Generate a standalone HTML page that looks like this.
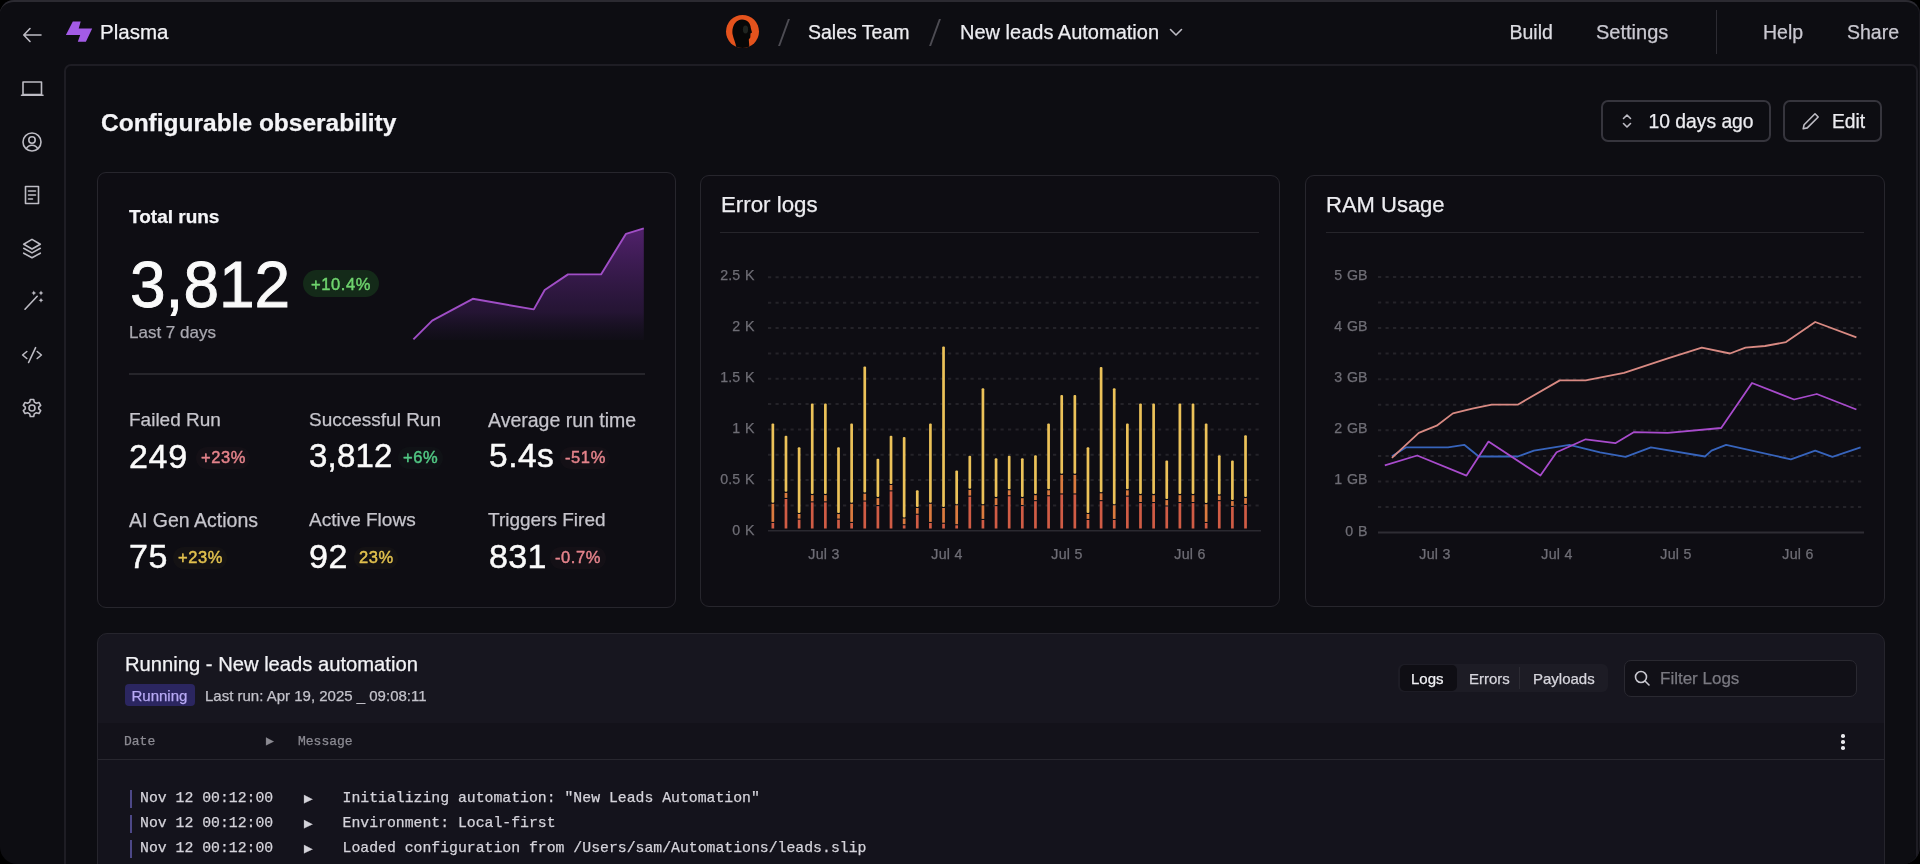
<!DOCTYPE html>
<html><head><meta charset="utf-8">
<style>
*{box-sizing:border-box;margin:0;padding:0}
html,body{width:1920px;height:864px;overflow:hidden;background:#000}
body{font-family:"Liberation Sans",sans-serif;color:#ececf0;position:relative}
.abs{position:absolute;white-space:pre;-webkit-text-stroke:0.25px currentColor}
#win{will-change:transform;position:absolute;left:0;top:0;width:1920px;height:864px;background:#0d0d12;overflow:hidden}
#frame{position:absolute;left:0;top:0;width:1920px;height:864px;border-radius:14px 14px 17px 17px;border-top:2.5px solid #2b2a31;border-right:1.5px solid #1b1a20;box-shadow:0 0 0 40px #000;pointer-events:none}
#main{position:absolute;left:64.3px;top:63.8px;width:1854px;height:840px;background:#0d0d12;border:2px solid #1e1d24;border-radius:7px}
.card{position:absolute;border:1.5px solid #27262d;border-radius:9px;background:#0e0d13}
.lab{font-size:14.2px;color:#6e6d75}
.mono{font-family:"Liberation Mono",monospace}
.ic{position:absolute;fill:none;stroke:#bdbcc4;stroke-width:1.6;stroke-linecap:round;stroke-linejoin:round}
</style></head><body>
<div id="win">
  <!-- top bar -->
  <svg class="ic" style="left:20px;top:24px" width="24" height="22" viewBox="0 0 24 22"><path d="M4 11H21M10 4.5L3.8 11L10 17.5"/></svg>
  <svg style="position:absolute;left:64px;top:19px" width="30" height="26" viewBox="0 0 30 26"><path fill="#a35be6" d="M8.8 2.5H16.7L14.7 9.5H28.2L21.9 22.7H13.8L16.2 16H1.9Z"/></svg>
  <div class="abs" style="left:100px;top:20px;font-size:20.5px;color:#f2f2f5">Plasma</div>

  <div style="position:absolute;left:726px;top:15px;width:33px;height:33px;border-radius:50%;background:#e4531d;overflow:hidden">
    <svg width="33" height="33" viewBox="0 0 33 33"><path fill="#070707" d="M10.5 34C10 28 7.5 24 6.5 19C5.5 11 10 4.5 16 4.5C21.5 4.5 24.5 8.5 24.8 13L26 17.5L24.5 18.5L24.3 22.5L22.8 24.5L23.5 34Z"/><ellipse cx="19.5" cy="14.5" rx="2.6" ry="4" fill="#3d4a40" opacity="0.45"/></svg>
  </div>
  <div style="position:absolute;left:783px;top:19px;width:1.6px;height:27px;background:#4d4c53;transform:skewX(-20deg)"></div>
  <div class="abs" style="left:808px;top:20.5px;font-size:19.5px;color:#ececf0">Sales Team</div>
  <div style="position:absolute;left:934px;top:19px;width:1.6px;height:27px;background:#4d4c53;transform:skewX(-20deg)"></div>
  <div class="abs" style="left:960px;top:20.5px;font-size:20px;color:#ececf0">New leads Automation</div>
  <svg class="ic" style="left:1168px;top:25px" width="16" height="14" viewBox="0 0 16 14"><path d="M2.5 4.5L8 10L13.5 4.5"/></svg>

  <div class="abs" style="left:1509.5px;top:20.5px;font-size:19.5px;color:#dcdce2">Build</div>
  <div class="abs" style="left:1596px;top:20.5px;font-size:20px;color:#c9c8d0">Settings</div>
  <div style="position:absolute;left:1716px;top:10px;width:1.3px;height:44px;background:#2c2b32"></div>
  <div class="abs" style="left:1763px;top:20.5px;font-size:19.5px;color:#c9c8d0">Help</div>
  <div class="abs" style="left:1847px;top:20.5px;font-size:19.5px;color:#c9c8d0">Share</div>

  <!-- sidebar -->
  
  <svg class="ic" style="left:18px;top:78px" width="28" height="22" viewBox="0 0 28 22"><path d="M5 4H23.5V16.5H5Z M3.5 17.3H25"/></svg>
  <svg class="ic" style="left:20px;top:130px" width="24" height="24" viewBox="0 0 24 24"><circle cx="12" cy="12" r="9"/><circle cx="12" cy="10" r="3.2"/><path d="M6.3 18.6C7.5 16.3 9.5 15.2 12 15.2S16.5 16.3 17.7 18.6"/></svg>
  <svg class="ic" style="left:20px;top:183px" width="24" height="24" viewBox="0 0 24 24"><path d="M5.5 3.5H18.5V20.5H5.5Z M8.5 8H15.5 M8.5 12H15.5 M8.5 16H12.5"/></svg>
  <svg class="ic" style="left:20px;top:236px" width="24" height="24" viewBox="0 0 24 24"><path d="M12 3.4L20.3 8.2L12 13L3.7 8.2Z M3.7 12.3L12 16.9L20.3 12.3 M3.7 17.2L12 21.8L20.3 17.2"/></svg>
  <svg class="ic" style="left:20px;top:288px" width="24" height="24" viewBox="0 0 24 24"><path d="M5 21.2L17.2 8.3"/><path fill="#bdbcc4" stroke="none" d="M13.8 2.6L14.6 4.2L16.2 5L14.6 5.8L13.8 7.4L13 5.8L11.4 5L13 4.2Z M21 2.6L21.8 4.2L23.4 5L21.8 5.8L21 7.4L20.2 5.8L18.6 5L20.2 4.2Z M21 9.9L21.8 11.5L23.4 12.3L21.8 13.1L21 14.7L20.2 13.1L18.6 12.3L20.2 11.5Z"/></svg>
  <svg class="ic" style="left:20px;top:342px" width="24" height="24" viewBox="0 0 24 24"><path d="M6.8 9.5L2.6 13L6.8 16.5 M17.2 9.5L21.4 13L17.2 16.5 M15.6 5.6L8.6 20.5"/></svg>
  <svg class="ic" style="left:20px;top:396px" width="24" height="24" viewBox="0 0 24 24"><circle cx="12" cy="12" r="3"/><path d="M10.3 3.5H13.7L14.3 6.1L16.4 7.3L19 6.5L20.7 9.4L18.7 11.2V12.8L20.7 14.6L19 17.5L16.4 16.7L14.3 17.9L13.7 20.5H10.3L9.7 17.9L7.6 16.7L5 17.5L3.3 14.6L5.3 12.8V11.2L3.3 9.4L5 6.5L7.6 7.3L9.7 6.1Z"/></svg>


  <div id="main"></div>
  <div class="abs" style="left:101px;top:108.5px;font-size:24.5px;font-weight:700;color:#f4f4f7">Configurable obserability</div>
  <div style="position:absolute;left:1601px;top:100px;width:170px;height:42px;border:2px solid #36353d;border-radius:7px"></div>
  <svg class="ic" style="left:1619px;top:112px" width="16" height="18" viewBox="0 0 16 18"><path d="M4.5 6.5L8 3L11.5 6.5 M4.5 11.5L8 15L11.5 11.5"/></svg>
  <div class="abs" style="left:1648.5px;top:110.5px;font-size:19.3px;color:#ececf0">10 days ago</div>
  <div style="position:absolute;left:1783px;top:100px;width:99px;height:42px;border:2px solid #36353d;border-radius:7px"></div>
  <svg class="ic" style="left:1800px;top:110px" width="22" height="22" viewBox="0 0 22 22"><path d="M15 3.8L18.2 7L7.3 17.9L3.2 18.8L4.1 14.7Z"/></svg>
  <div class="abs" style="left:1832px;top:110.5px;font-size:19.3px;color:#ececf0">Edit</div>

  <!-- card 1 -->
  <div class="card" style="left:97px;top:171.5px;width:579px;height:436.5px"></div>
  <div class="abs" style="left:129px;top:205.5px;font-size:19px;font-weight:700;color:#f4f4f7">Total runs</div>
  <div class="abs" style="left:130px;top:248px;font-size:64px;color:#fafafa;-webkit-text-stroke:0.9px #fafafa">3,812</div>
  <div style="position:absolute;left:303px;top:270px;width:76px;height:27px;border-radius:14px;background:#142a19"></div>
  <div class="abs" style="left:311px;top:274.5px;font-size:16.5px;letter-spacing:0.6px;color:#6fd46e;-webkit-text-stroke:0.45px #6fd46e">+10.4%</div>
  <div class="abs" style="left:129px;top:323px;font-size:17px;color:#a9a8b0">Last 7 days</div>
  <div style="position:absolute;left:129px;top:373px;width:516px;height:1.5px;background:#26252b"></div>

  <div class="abs" style="left:129px;top:408.5px;font-size:19px;color:#c6c5cc">Failed Run</div>
  <div class="abs" style="left:129px;top:436.5px;letter-spacing:0.7px;font-size:34px;color:#fafafa;-webkit-text-stroke:0.5px #fafafa">249</div>
  <div class="abs" style="left:196px;top:446.8px;padding:1.5px 4.4px 1.5px 5px;border-radius:11px;background:rgba(229,131,139,0.03);font-size:16.5px;letter-spacing:0.6px;color:#e5838b;-webkit-text-stroke:0.45px #e5838b">+23%</div>
  <div class="abs" style="left:309px;top:408.5px;font-size:19px;color:#c6c5cc">Successful Run</div>
  <div class="abs" style="left:309px;top:436.5px;letter-spacing:0.2px;font-size:33px;color:#fafafa;-webkit-text-stroke:0.5px #fafafa">3,812</div>
  <div class="abs" style="left:398px;top:446.8px;padding:1.5px 4.4px 1.5px 5px;border-radius:11px;background:rgba(82,201,133,0.03);font-size:16.5px;letter-spacing:0.6px;color:#52c985;-webkit-text-stroke:0.45px #52c985">+6%</div>
  <div class="abs" style="left:488px;top:408.5px;font-size:19.5px;color:#c6c5cc">Average run time</div>
  <div class="abs" style="left:489px;top:436.5px;letter-spacing:0.5px;font-size:33.5px;color:#fafafa;-webkit-text-stroke:0.5px #fafafa">5.4s</div>
  <div class="abs" style="left:560px;top:446.8px;padding:1.5px 4.4px 1.5px 5px;border-radius:11px;background:rgba(229,131,139,0.03);font-size:16.5px;letter-spacing:0.6px;color:#e5838b;-webkit-text-stroke:0.45px #e5838b">-51%</div>

  <div class="abs" style="left:129px;top:508.5px;font-size:19.5px;color:#c6c5cc">AI Gen Actions</div>
  <div class="abs" style="left:129px;top:536.5px;letter-spacing:0.7px;font-size:34px;color:#fafafa;-webkit-text-stroke:0.5px #fafafa">75</div>
  <div class="abs" style="left:173px;top:546.8px;padding:1.5px 4.4px 1.5px 5px;border-radius:11px;background:rgba(226,193,78,0.03);font-size:16.5px;letter-spacing:0.6px;color:#e2c14e;-webkit-text-stroke:0.45px #e2c14e">+23%</div>
  <div class="abs" style="left:309px;top:508.5px;font-size:19px;color:#c6c5cc">Active Flows</div>
  <div class="abs" style="left:309px;top:536.5px;letter-spacing:0.7px;font-size:34px;color:#fafafa;-webkit-text-stroke:0.5px #fafafa">92</div>
  <div class="abs" style="left:354px;top:546.8px;padding:1.5px 4.4px 1.5px 5px;border-radius:11px;background:rgba(226,193,78,0.03);font-size:16.5px;letter-spacing:0.6px;color:#e2c14e;-webkit-text-stroke:0.45px #e2c14e">23%</div>
  <div class="abs" style="left:488px;top:508.5px;font-size:19px;color:#c6c5cc">Triggers Fired</div>
  <div class="abs" style="left:489px;top:536.5px;letter-spacing:0.3px;font-size:34px;color:#fafafa;-webkit-text-stroke:0.5px #fafafa">831</div>
  <div class="abs" style="left:550px;top:546.8px;padding:1.5px 4.4px 1.5px 5px;border-radius:11px;background:rgba(229,131,139,0.03);font-size:16.5px;letter-spacing:0.6px;color:#e5838b;-webkit-text-stroke:0.45px #e5838b">-0.7%</div>

  <!-- card 2 -->
  <div class="card" style="left:700px;top:175px;width:580px;height:432px"></div>
  <div class="abs" style="left:721px;top:192px;font-size:22.3px;color:#ececf0">Error logs</div>
  <div style="position:absolute;left:720px;top:231.8px;width:539px;height:1.3px;background:#26252b"></div>
  <!-- card 3 -->
  <div class="card" style="left:1305px;top:175px;width:580px;height:432px"></div>
  <div class="abs" style="left:1326px;top:192px;font-size:22px;color:#ececf0">RAM Usage</div>
  <div style="position:absolute;left:1326px;top:231.8px;width:538px;height:1.3px;background:#26252b"></div>
<div class="abs lab" style="left:700.5px;width:54px;word-spacing:1px;text-align:right;top:267px">2.5 K</div><div class="abs lab" style="left:700.5px;width:54px;word-spacing:1px;text-align:right;top:318px">2 K</div><div class="abs lab" style="left:700.5px;width:54px;word-spacing:1px;text-align:right;top:369px">1.5 K</div><div class="abs lab" style="left:700.5px;width:54px;word-spacing:1px;text-align:right;top:420px">1 K</div><div class="abs lab" style="left:700.5px;width:54px;word-spacing:1px;text-align:right;top:471px">0.5 K</div><div class="abs lab" style="left:700.5px;width:54px;word-spacing:1px;text-align:right;top:522px">0 K</div><div class="abs lab" style="left:784px;width:80px;text-align:center;top:546.3px;letter-spacing:0.3px">Jul 3</div><div class="abs lab" style="left:907px;width:80px;text-align:center;top:546.3px;letter-spacing:0.3px">Jul 4</div><div class="abs lab" style="left:1027px;width:80px;text-align:center;top:546.3px;letter-spacing:0.3px">Jul 5</div><div class="abs lab" style="left:1150px;width:80px;text-align:center;top:546.3px;letter-spacing:0.3px">Jul 6</div><div class="abs lab" style="left:1300.5px;width:67px;word-spacing:1px;text-align:right;top:267px">5 GB</div><div class="abs lab" style="left:1300.5px;width:67px;word-spacing:1px;text-align:right;top:318px">4 GB</div><div class="abs lab" style="left:1300.5px;width:67px;word-spacing:1px;text-align:right;top:369px">3 GB</div><div class="abs lab" style="left:1300.5px;width:67px;word-spacing:1px;text-align:right;top:420px">2 GB</div><div class="abs lab" style="left:1300.5px;width:67px;word-spacing:1px;text-align:right;top:471px">1 GB</div><div class="abs lab" style="left:1300.5px;width:67px;word-spacing:1px;text-align:right;top:523px">0 B</div><div class="abs lab" style="left:1395px;width:80px;text-align:center;top:546.3px;letter-spacing:0.3px">Jul 3</div><div class="abs lab" style="left:1517px;width:80px;text-align:center;top:546.3px;letter-spacing:0.3px">Jul 4</div><div class="abs lab" style="left:1636px;width:80px;text-align:center;top:546.3px;letter-spacing:0.3px">Jul 5</div><div class="abs lab" style="left:1758px;width:80px;text-align:center;top:546.3px;letter-spacing:0.3px">Jul 6</div>
  <svg style="position:absolute;left:0;top:0" width="1920" height="864">
   <defs><linearGradient id="sg" x1="0" y1="0" x2="0" y2="1"><stop offset="0" stop-color="#7a2ea2" stop-opacity="0.62"/><stop offset="0.75" stop-color="#5a2680" stop-opacity="0.3"/><stop offset="1" stop-color="#3a1f5a" stop-opacity="0.05"/></linearGradient></defs>
   <path fill="url(#sg)" d="M413.4 339.4L432.2 320.6L472.8 298.8L533.8 309.4L544.7 290L568 274.4L601 274.4L626 233.8L643.8 228.4V340H413.4Z"/>
   <polyline fill="none" stroke="#a04ec6" stroke-width="1.9" stroke-linejoin="round" points="413.4,339.4 432.2,320.6 472.8,298.8 533.8,309.4 544.7,290 568,274.4 601,274.4 626,233.8 643.8,228.4"/>
   <line x1="768" y1="277.3" x2="1261" y2="277.3" stroke="#242329" stroke-width="2" stroke-dasharray="3.2 4.3"/>
<line x1="768" y1="302.7" x2="1261" y2="302.7" stroke="#242329" stroke-width="2" stroke-dasharray="3.2 4.3"/>
<line x1="768" y1="328.0" x2="1261" y2="328.0" stroke="#242329" stroke-width="2" stroke-dasharray="3.2 4.3"/>
<line x1="768" y1="353.4" x2="1261" y2="353.4" stroke="#242329" stroke-width="2" stroke-dasharray="3.2 4.3"/>
<line x1="768" y1="378.7" x2="1261" y2="378.7" stroke="#242329" stroke-width="2" stroke-dasharray="3.2 4.3"/>
<line x1="768" y1="404.1" x2="1261" y2="404.1" stroke="#242329" stroke-width="2" stroke-dasharray="3.2 4.3"/>
<line x1="768" y1="429.4" x2="1261" y2="429.4" stroke="#242329" stroke-width="2" stroke-dasharray="3.2 4.3"/>
<line x1="768" y1="454.8" x2="1261" y2="454.8" stroke="#242329" stroke-width="2" stroke-dasharray="3.2 4.3"/>
<line x1="768" y1="480.1" x2="1261" y2="480.1" stroke="#242329" stroke-width="2" stroke-dasharray="3.2 4.3"/>
<line x1="768" y1="505.5" x2="1261" y2="505.5" stroke="#242329" stroke-width="2" stroke-dasharray="3.2 4.3"/>
<line x1="768" y1="530.8" x2="1261" y2="530.8" stroke="#2a2930" stroke-width="1.6"/>
<rect x="771.50" y="423.6" width="2.7" height="79.1" rx="1" fill="#ecc259"/>
<rect x="771.50" y="503.8" width="2.7" height="18.1" fill="#db7b3f"/>
<rect x="771.50" y="523.0" width="2.7" height="5.5" fill="#d05c45"/>
<rect x="784.63" y="435.7" width="2.7" height="56.1" rx="1" fill="#ecc259"/>
<rect x="784.63" y="492.9" width="2.7" height="5.0" fill="#db7b3f"/>
<rect x="784.63" y="499.0" width="2.7" height="29.5" fill="#d05c45"/>
<rect x="797.76" y="447.2" width="2.7" height="65.7" rx="1" fill="#ecc259"/>
<rect x="797.76" y="514.0" width="2.7" height="4.6" fill="#db7b3f"/>
<rect x="797.76" y="519.7" width="2.7" height="8.8" fill="#d05c45"/>
<rect x="810.89" y="403.4" width="2.7" height="90.6" rx="1" fill="#ecc259"/>
<rect x="810.89" y="495.1" width="2.7" height="6.2" fill="#db7b3f"/>
<rect x="810.89" y="502.4" width="2.7" height="26.1" fill="#d05c45"/>
<rect x="824.02" y="403.4" width="2.7" height="90.6" rx="1" fill="#ecc259"/>
<rect x="824.02" y="495.1" width="2.7" height="6.2" fill="#db7b3f"/>
<rect x="824.02" y="502.4" width="2.7" height="26.1" fill="#d05c45"/>
<rect x="837.15" y="447.2" width="2.7" height="65.8" rx="1" fill="#ecc259"/>
<rect x="837.15" y="514.1" width="2.7" height="4.5" fill="#db7b3f"/>
<rect x="837.15" y="519.7" width="2.7" height="8.8" fill="#d05c45"/>
<rect x="850.28" y="423.6" width="2.7" height="79.1" rx="1" fill="#ecc259"/>
<rect x="850.28" y="503.8" width="2.7" height="18.1" fill="#db7b3f"/>
<rect x="850.28" y="523.0" width="2.7" height="5.5" fill="#d05c45"/>
<rect x="863.41" y="366.5" width="2.7" height="126.1" rx="1" fill="#ecc259"/>
<rect x="863.41" y="493.7" width="2.7" height="6.8" fill="#db7b3f"/>
<rect x="863.41" y="501.6" width="2.7" height="26.9" fill="#d05c45"/>
<rect x="876.54" y="458.8" width="2.7" height="38.3" rx="1" fill="#ecc259"/>
<rect x="876.54" y="498.2" width="2.7" height="6.8" fill="#db7b3f"/>
<rect x="876.54" y="506.1" width="2.7" height="22.4" fill="#d05c45"/>
<rect x="889.67" y="435.7" width="2.7" height="48.2" rx="1" fill="#ecc259"/>
<rect x="889.67" y="485.0" width="2.7" height="5.3" fill="#db7b3f"/>
<rect x="889.67" y="491.4" width="2.7" height="37.1" fill="#d05c45"/>
<rect x="902.80" y="437.0" width="2.7" height="80.4" rx="1" fill="#ecc259"/>
<rect x="902.80" y="518.5" width="2.7" height="5.7" fill="#db7b3f"/>
<rect x="902.80" y="525.3" width="2.7" height="3.2" fill="#d05c45"/>
<rect x="915.93" y="490.3" width="2.7" height="16.6" rx="1" fill="#ecc259"/>
<rect x="915.93" y="508.0" width="2.7" height="5.7" fill="#db7b3f"/>
<rect x="915.93" y="514.8" width="2.7" height="13.7" fill="#d05c45"/>
<rect x="929.06" y="423.6" width="2.7" height="79.1" rx="1" fill="#ecc259"/>
<rect x="929.06" y="503.8" width="2.7" height="18.1" fill="#db7b3f"/>
<rect x="929.06" y="523.0" width="2.7" height="5.5" fill="#d05c45"/>
<rect x="942.19" y="346.5" width="2.7" height="160.4" rx="1" fill="#ecc259"/>
<rect x="942.19" y="508.0" width="2.7" height="14.7" fill="#db7b3f"/>
<rect x="942.19" y="523.8" width="2.7" height="4.7" fill="#d05c45"/>
<rect x="955.32" y="470.5" width="2.7" height="33.7" rx="1" fill="#ecc259"/>
<rect x="955.32" y="505.3" width="2.7" height="18.9" fill="#db7b3f"/>
<rect x="955.32" y="525.3" width="2.7" height="3.2" fill="#d05c45"/>
<rect x="968.45" y="455.7" width="2.7" height="33.1" rx="1" fill="#ecc259"/>
<rect x="968.45" y="489.9" width="2.7" height="5.7" fill="#db7b3f"/>
<rect x="968.45" y="496.7" width="2.7" height="31.8" fill="#d05c45"/>
<rect x="981.58" y="388.3" width="2.7" height="115.9" rx="1" fill="#ecc259"/>
<rect x="981.58" y="505.3" width="2.7" height="13.6" fill="#db7b3f"/>
<rect x="981.58" y="520.0" width="2.7" height="8.5" fill="#d05c45"/>
<rect x="994.71" y="458.3" width="2.7" height="38.8" rx="1" fill="#ecc259"/>
<rect x="994.71" y="498.2" width="2.7" height="6.8" fill="#db7b3f"/>
<rect x="994.71" y="506.1" width="2.7" height="22.4" fill="#d05c45"/>
<rect x="1007.84" y="455.7" width="2.7" height="33.5" rx="1" fill="#ecc259"/>
<rect x="1007.84" y="490.3" width="2.7" height="4.9" fill="#db7b3f"/>
<rect x="1007.84" y="496.3" width="2.7" height="32.2" fill="#d05c45"/>
<rect x="1020.97" y="458.3" width="2.7" height="38.8" rx="1" fill="#ecc259"/>
<rect x="1020.97" y="498.2" width="2.7" height="6.8" fill="#db7b3f"/>
<rect x="1020.97" y="506.1" width="2.7" height="22.4" fill="#d05c45"/>
<rect x="1034.10" y="455.2" width="2.7" height="38.9" rx="1" fill="#ecc259"/>
<rect x="1034.10" y="495.2" width="2.7" height="4.9" fill="#db7b3f"/>
<rect x="1034.10" y="501.2" width="2.7" height="27.3" fill="#d05c45"/>
<rect x="1047.23" y="423.6" width="2.7" height="65.6" rx="1" fill="#ecc259"/>
<rect x="1047.23" y="490.3" width="2.7" height="4.9" fill="#db7b3f"/>
<rect x="1047.23" y="496.3" width="2.7" height="32.2" fill="#d05c45"/>
<rect x="1060.36" y="394.9" width="2.7" height="78.9" rx="1" fill="#ecc259"/>
<rect x="1060.36" y="474.9" width="2.7" height="18.5" fill="#db7b3f"/>
<rect x="1060.36" y="494.5" width="2.7" height="34.0" fill="#d05c45"/>
<rect x="1073.49" y="394.9" width="2.7" height="78.9" rx="1" fill="#ecc259"/>
<rect x="1073.49" y="474.9" width="2.7" height="18.5" fill="#db7b3f"/>
<rect x="1073.49" y="494.5" width="2.7" height="34.0" fill="#d05c45"/>
<rect x="1086.62" y="447.2" width="2.7" height="65.7" rx="1" fill="#ecc259"/>
<rect x="1086.62" y="514.0" width="2.7" height="4.9" fill="#db7b3f"/>
<rect x="1086.62" y="520.0" width="2.7" height="8.5" fill="#d05c45"/>
<rect x="1099.75" y="366.9" width="2.7" height="125.3" rx="1" fill="#ecc259"/>
<rect x="1099.75" y="493.3" width="2.7" height="6.8" fill="#db7b3f"/>
<rect x="1099.75" y="501.2" width="2.7" height="27.3" fill="#d05c45"/>
<rect x="1112.88" y="388.3" width="2.7" height="115.9" rx="1" fill="#ecc259"/>
<rect x="1112.88" y="505.3" width="2.7" height="13.6" fill="#db7b3f"/>
<rect x="1112.88" y="520.0" width="2.7" height="8.5" fill="#d05c45"/>
<rect x="1126.01" y="423.6" width="2.7" height="65.6" rx="1" fill="#ecc259"/>
<rect x="1126.01" y="490.3" width="2.7" height="5.3" fill="#db7b3f"/>
<rect x="1126.01" y="496.7" width="2.7" height="31.8" fill="#d05c45"/>
<rect x="1139.14" y="403.4" width="2.7" height="90.7" rx="1" fill="#ecc259"/>
<rect x="1139.14" y="495.2" width="2.7" height="6.8" fill="#db7b3f"/>
<rect x="1139.14" y="503.1" width="2.7" height="25.4" fill="#d05c45"/>
<rect x="1152.27" y="403.4" width="2.7" height="90.7" rx="1" fill="#ecc259"/>
<rect x="1152.27" y="495.2" width="2.7" height="6.8" fill="#db7b3f"/>
<rect x="1152.27" y="503.1" width="2.7" height="25.4" fill="#d05c45"/>
<rect x="1165.40" y="460.5" width="2.7" height="38.5" rx="1" fill="#ecc259"/>
<rect x="1165.40" y="500.1" width="2.7" height="5.3" fill="#db7b3f"/>
<rect x="1165.40" y="506.5" width="2.7" height="22.0" fill="#d05c45"/>
<rect x="1178.53" y="403.4" width="2.7" height="90.7" rx="1" fill="#ecc259"/>
<rect x="1178.53" y="495.2" width="2.7" height="6.8" fill="#db7b3f"/>
<rect x="1178.53" y="503.1" width="2.7" height="25.4" fill="#d05c45"/>
<rect x="1191.66" y="403.4" width="2.7" height="90.7" rx="1" fill="#ecc259"/>
<rect x="1191.66" y="495.2" width="2.7" height="6.8" fill="#db7b3f"/>
<rect x="1191.66" y="503.1" width="2.7" height="25.4" fill="#d05c45"/>
<rect x="1204.79" y="423.6" width="2.7" height="79.5" rx="1" fill="#ecc259"/>
<rect x="1204.79" y="504.2" width="2.7" height="17.7" fill="#db7b3f"/>
<rect x="1204.79" y="523.0" width="2.7" height="5.5" fill="#d05c45"/>
<rect x="1217.92" y="455.2" width="2.7" height="39.3" rx="1" fill="#ecc259"/>
<rect x="1217.92" y="495.6" width="2.7" height="4.5" fill="#db7b3f"/>
<rect x="1217.92" y="501.2" width="2.7" height="27.3" fill="#d05c45"/>
<rect x="1231.05" y="460.5" width="2.7" height="39.5" rx="1" fill="#ecc259"/>
<rect x="1231.05" y="501.1" width="2.7" height="4.8" fill="#db7b3f"/>
<rect x="1231.05" y="507.0" width="2.7" height="21.5" fill="#d05c45"/>
<rect x="1244.18" y="435.2" width="2.7" height="61.8" rx="1" fill="#ecc259"/>
<rect x="1244.18" y="498.1" width="2.7" height="5.8" fill="#db7b3f"/>
<rect x="1244.18" y="505.0" width="2.7" height="23.5" fill="#d05c45"/>
<line x1="1378" y1="277.0" x2="1864" y2="277.0" stroke="#242329" stroke-width="2" stroke-dasharray="3.2 4.3"/>
<line x1="1378" y1="302.6" x2="1864" y2="302.6" stroke="#242329" stroke-width="2" stroke-dasharray="3.2 4.3"/>
<line x1="1378" y1="328.1" x2="1864" y2="328.1" stroke="#242329" stroke-width="2" stroke-dasharray="3.2 4.3"/>
<line x1="1378" y1="353.6" x2="1864" y2="353.6" stroke="#242329" stroke-width="2" stroke-dasharray="3.2 4.3"/>
<line x1="1378" y1="379.2" x2="1864" y2="379.2" stroke="#242329" stroke-width="2" stroke-dasharray="3.2 4.3"/>
<line x1="1378" y1="404.8" x2="1864" y2="404.8" stroke="#242329" stroke-width="2" stroke-dasharray="3.2 4.3"/>
<line x1="1378" y1="430.3" x2="1864" y2="430.3" stroke="#242329" stroke-width="2" stroke-dasharray="3.2 4.3"/>
<line x1="1378" y1="455.9" x2="1864" y2="455.9" stroke="#242329" stroke-width="2" stroke-dasharray="3.2 4.3"/>
<line x1="1378" y1="481.4" x2="1864" y2="481.4" stroke="#242329" stroke-width="2" stroke-dasharray="3.2 4.3"/>
<line x1="1378" y1="507.0" x2="1864" y2="507.0" stroke="#242329" stroke-width="2" stroke-dasharray="3.2 4.3"/>
<line x1="1378" y1="532.5" x2="1864" y2="532.5" stroke="#2e2d34" stroke-width="2"/>
<polyline fill="none" stroke="#3764bc" stroke-width="1.8" stroke-linejoin="round" points="1391.9,456.2 1405.9,447.4 1448.0,447.4 1464.2,444.8 1478.8,456.5 1517.7,456.5 1533.9,450.7 1569.5,444.8 1600.0,452.3 1625.6,456.8 1650.9,447.4 1705.0,456.5 1711.5,450.7 1726.1,444.8 1790.9,459.4 1815.2,450.7 1832.4,456.8 1860.6,447.4"/>
<polyline fill="none" stroke="#a84bcc" stroke-width="1.8" stroke-linejoin="round" points="1384.8,465.3 1417.2,455.5 1466.5,475.6 1488.5,441.6 1540.4,475.6 1556.6,452.3 1585.7,439.3 1615.3,443.2 1633.7,432.2 1667.8,432.9 1721.2,428.0 1752.0,383.0 1794.1,399.5 1816.8,394.0 1856.4,409.5"/>
<polyline fill="none" stroke="#d98a83" stroke-width="1.8" stroke-linejoin="round" points="1391.9,457.8 1418.8,432.9 1436.7,425.7 1452.9,413.4 1472.3,408.6 1491.7,404.7 1517.7,404.7 1559.8,380.4 1585.7,380.4 1624.0,372.9 1667.8,358.3 1701.8,347.6 1730.0,353.5 1745.5,347.6 1765.0,346.0 1786.0,342.1 1815.2,322.0 1856.4,337.3"/>
  </svg>

  <div style="position:absolute;left:97px;top:633px;width:1788px;height:260px;background:#17161f;border:1.5px solid #26252d;border-radius:10px;overflow:hidden">
    <div style="position:absolute;left:0;top:88.5px;width:100%;height:37.5px;background:#13121a;border-bottom:1.5px solid #28272f"></div>
    <div style="position:absolute;left:0;top:126px;width:100%;height:200px;background:#14131c"></div>
  </div>
  <div class="abs" style="left:125px;top:653px;font-size:20.2px;color:#f2f2f5">Running - New leads automation</div>
  <div style="position:absolute;left:125px;top:684px;width:70px;height:22px;border-radius:4px;background:#2b2660"></div>
  <div class="abs" style="left:131.5px;top:686.5px;font-size:15px;color:#b8aaf5">Running</div>
  <div class="abs" style="left:205px;top:686.5px;font-size:15px;color:#c3c2ca">Last run: Apr 19, 2025 _ 09:08:11</div>

  <div style="position:absolute;left:1398px;top:664px;width:210px;height:28px;border-radius:6px;background:#1d1c25"></div>
  <div style="position:absolute;left:1400px;top:665px;width:57px;height:26px;border-radius:5px;background:#0f0e14"></div>
  <div style="position:absolute;left:1519px;top:667px;width:1px;height:22px;background:#2c2b33"></div>
  <div class="abs" style="left:1411px;top:670px;font-size:15px;color:#f0f0f4">Logs</div>
  <div class="abs" style="left:1469px;top:670px;font-size:15px;color:#d6d5dc">Errors</div>
  <div class="abs" style="left:1533px;top:670px;font-size:15px;color:#d6d5dc">Payloads</div>

  <div style="position:absolute;left:1624px;top:659.5px;width:233px;height:37px;border-radius:7px;background:#111017;border:1.5px solid #2a2931"></div>
  <svg class="ic" style="left:1632px;top:668px;stroke:#c9c8d0" width="20" height="20" viewBox="0 0 20 20"><circle cx="9" cy="9" r="5.5"/><path d="M13 13L17 17"/></svg>
  <div class="abs" style="left:1660px;top:668.5px;font-size:17px;color:#7a7981">Filter Logs</div>

  <div class="abs mono" style="left:124px;top:734px;font-size:13px;color:#8c8b93">Date</div>
  <div class="abs" style="left:265.5px;top:735px;font-size:10px;color:#8c8b93">&#9654;</div>
  <div class="abs mono" style="left:298px;top:734px;font-size:13px;color:#8c8b93">Message</div>
  <div style="position:absolute;left:1841px;top:734px;width:3.5px;height:3.5px;border-radius:50%;background:#e8e8ec;box-shadow:0 6px 0 #e8e8ec,0 12px 0 #e8e8ec"></div>
  <div style="position:absolute;left:129.5px;top:790px;width:2.5px;height:18px;background:#4d4888"></div>
  <div class="abs mono" style="left:140px;top:790px;font-size:14.8px;color:#d4d3da">Nov 12 00:12:00</div>
  <div class="abs" style="left:303.5px;top:792px;font-size:11px;color:#d4d3da">&#9654;</div>
  <div class="abs mono" style="left:342.5px;top:790px;font-size:14.8px;color:#d4d3da">Initializing automation: &quot;New Leads Automation&quot;</div>
  <div style="position:absolute;left:129.5px;top:815px;width:2.5px;height:18px;background:#4d4888"></div>
  <div class="abs mono" style="left:140px;top:815px;font-size:14.8px;color:#d4d3da">Nov 12 00:12:00</div>
  <div class="abs" style="left:303.5px;top:817px;font-size:11px;color:#d4d3da">&#9654;</div>
  <div class="abs mono" style="left:342.5px;top:815px;font-size:14.8px;color:#d4d3da">Environment: Local-first</div>
  <div style="position:absolute;left:129.5px;top:840px;width:2.5px;height:18px;background:#4d4888"></div>
  <div class="abs mono" style="left:140px;top:840px;font-size:14.8px;color:#d4d3da">Nov 12 00:12:00</div>
  <div class="abs" style="left:303.5px;top:842px;font-size:11px;color:#d4d3da">&#9654;</div>
  <div class="abs mono" style="left:342.5px;top:840px;font-size:14.8px;color:#d4d3da">Loaded configuration from /Users/sam/Automations/leads.slip</div>

</div>
<div id="frame"></div>
</body></html>
